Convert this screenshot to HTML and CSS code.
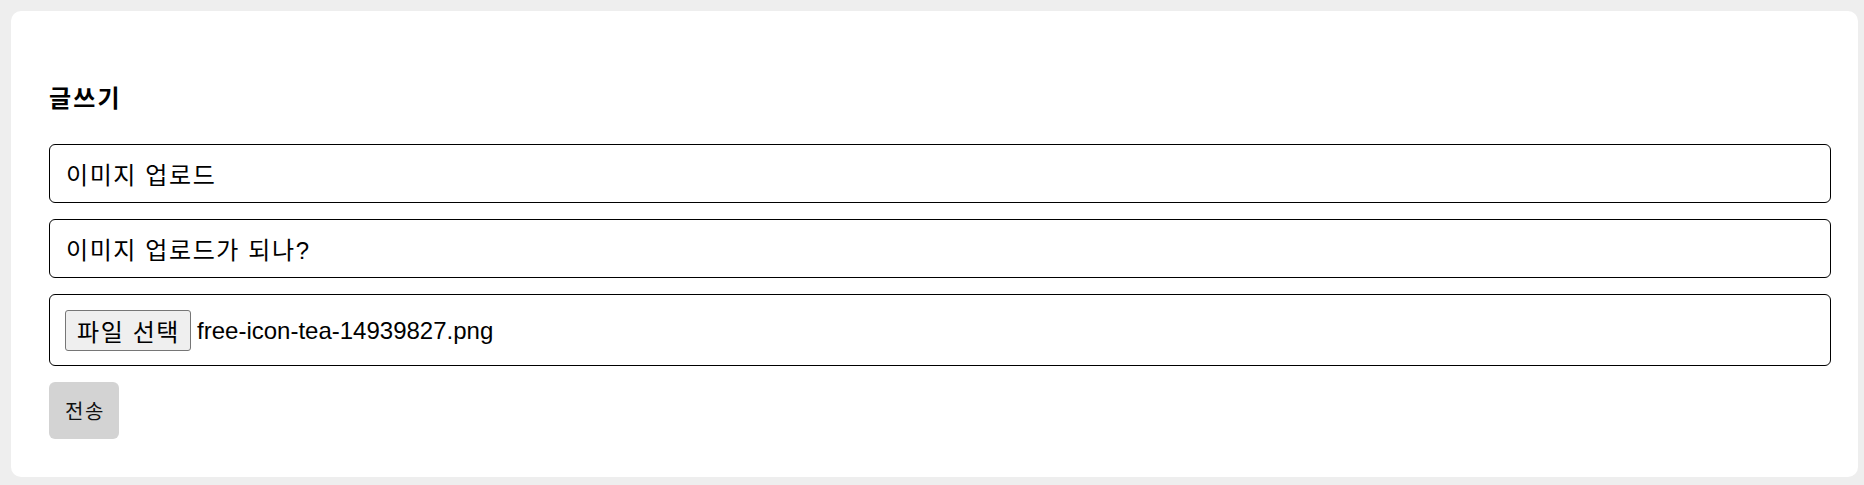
FILE: index.html
```html
<!DOCTYPE html>
<html lang="ko">
<head>
<meta charset="utf-8">
<title>글쓰기</title>
<link rel="stylesheet" href="styles.css">
</head>
<body>
  <main class="card">
    <form class="post-form">
      <h2 class="title">글쓰기</h2>
      <input class="field" type="text" value="이미지 업로드">
      <input class="field" type="text" value="이미지 업로드가 되나?">
      <div class="field file-field">
        <button type="button" class="file-btn">파일 선택</button>
        <span class="file-name">free-icon-tea-14939827.png</span>
      </div>
      <div class="actions">
        <button type="button" class="submit-btn">전송</button>
      </div>
    </form>
  </main>
</body>
</html>
```

FILE: styles.css
```css
* {
  box-sizing: border-box;
}

html, body {
  margin: 0;
  background: #eeeeee;
}

body {
  padding: 11px 6px 8px 11px;
  font-family: "Liberation Sans", "Noto Sans CJK KR", sans-serif;
  color: #000;
}

.card {
  background: #ffffff;
  border-radius: 10px;
  padding: 38px 27px 38px 38px;
}

.post-form {
  display: flex;
  flex-direction: column;
  gap: 16px;
  margin: 0;
}

.title {
  margin: 32px 0 15px 0;
  font-family: "Noto Sans CJK KR", sans-serif;
  font-size: 24px;
  font-weight: 700;
  line-height: 32px;
  letter-spacing: 2.2px;
}

.field {
  display: block;
  width: 100%;
  height: 59px;
  margin: 0;
  padding: 15px 16px;
  border: 1px solid #000;
  border-radius: 6px;
  background: #fff;
  font-family: "Liberation Sans", "Noto Sans CJK KR", sans-serif;
  font-size: 24px;
  line-height: 27px;
  letter-spacing: 1.6px;
  color: #000;
  outline: none;
}

.file-field {
  display: flex;
  align-items: center;
  height: 72px;
  padding: 14px 15px;
  letter-spacing: 0;
}

.file-btn {
  height: 41px;
  margin: 0 6px 0 0;
  padding: 0 10px 0 11px;
  background: #efefef;
  border: 1px solid #767676;
  border-radius: 3px;
  font-family: "Noto Sans CJK KR", sans-serif;
  font-size: 24px;
  line-height: 39px;
  letter-spacing: 1.6px;
  color: #000;
}

.file-name {
  font-size: 24px;
  line-height: 27px;
}

.actions {
  display: flex;
}

.submit-btn {
  height: 57px;
  padding: 0 14px 0 16px;
  border: none;
  border-radius: 6px;
  background: #d3d3d3;
  font-family: "Noto Sans CJK KR", sans-serif;
  font-size: 20px;
  letter-spacing: 1.5px;
  color: #111;
}
```
